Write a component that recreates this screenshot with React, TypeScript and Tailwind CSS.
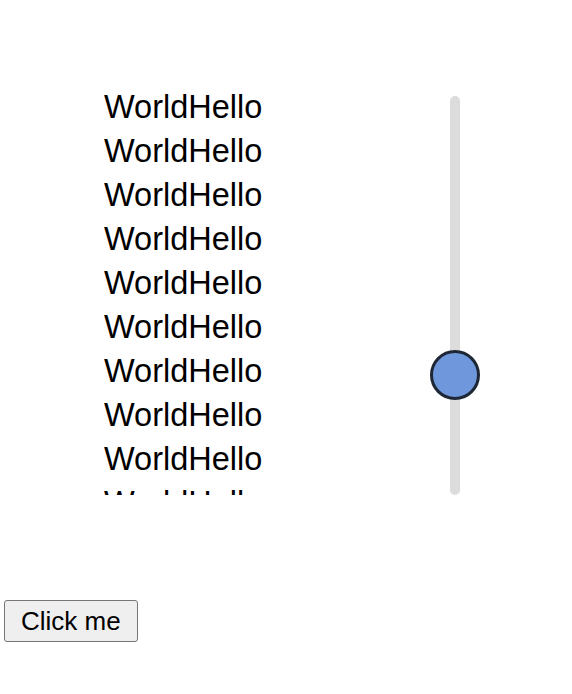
const rows = Array.from({ length: 10 }, () => "WorldHello");

export default function App() {
  return (
    <div className="min-h-[694px] w-[572px] bg-white text-black font-['Liberation_Sans',Arial,sans-serif]">
      <div className="flex pt-[85px]">
        {/* list */}
        <div className="ml-[104px] h-[410px] w-[300px] overflow-hidden">
          {rows.map((r, i) => (
            <div key={i} className="text-[32.5px] leading-[44px]">
              {r}
            </div>
          ))}
        </div>
        {/* vertical slider */}
        <div className="relative ml-[46px] mt-[11px] h-[399px] w-[10px] rounded-full bg-[#dcdcdc]">
          <div className="absolute left-1/2 top-[254px] h-[50px] w-[50px] -translate-x-1/2 rounded-full border-[3px] border-[#1d2735] bg-[#6f97dc]" />
        </div>
      </div>
      <div className="mt-[105px] pl-[4px]">
        <button className="h-[42px] rounded-[3px] border border-[#767676] bg-[#efefef] px-[16px] text-[26px] leading-none text-black">
          Click me
        </button>
      </div>
    </div>
  );
}
